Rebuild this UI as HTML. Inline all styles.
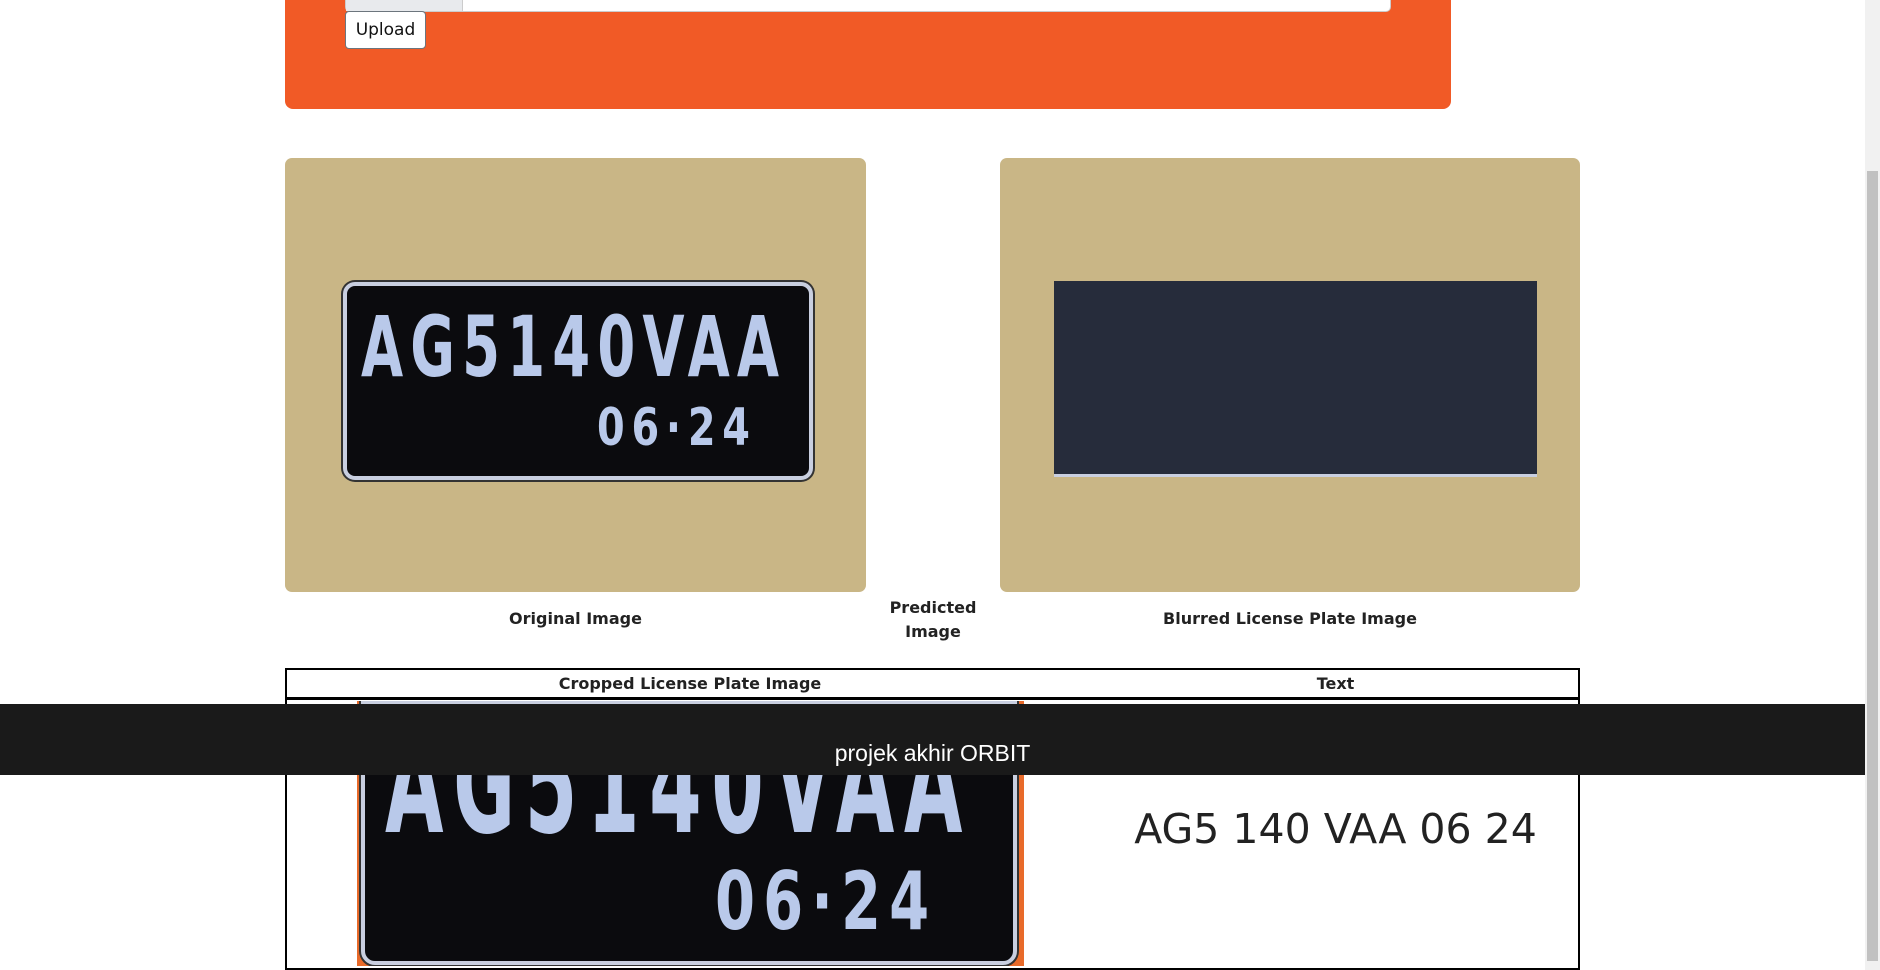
<!DOCTYPE html>
<html><head><meta charset="utf-8"><style>
body{margin:0;width:1880px;height:970px;overflow:hidden;background:#fff;font-family:"DejaVu Sans","Liberation Sans",sans-serif;position:relative}
.a{position:absolute}
.tan{background:#c9b686;border-radius:7px;overflow:hidden}
.plate{background:#0b0b0e;border:4px solid #c9cfe0;border-radius:12px;box-shadow:0 0 0 2px #333;color:#b9c9ea;font-family:"DejaVu Sans Condensed","DejaVu Sans",sans-serif;font-weight:bold}
.cap{font-weight:bold;font-size:16px;color:#222;text-align:center}
</style></head><body>
<div class="a" style="left:285px;top:-10px;width:1166px;height:119px;background:#f15a26;border-radius:8px"></div>
<div class="a" style="left:345px;top:-4px;width:1044px;height:14px;background:#fff;border:1px solid #ccc;border-radius:0 0 5px 5px"></div>
<div class="a" style="left:346px;top:-4px;width:116px;height:15px;background:#e8eaed;border-right:1px solid #ccc"></div>
<div class="a" style="left:345px;top:11px;width:79px;height:36px;background:#fff;border:1px solid #6c757d;border-radius:4px;font-size:17px;line-height:36px;text-align:center;color:#111">Upload</div>

<div class="a tan" style="left:285px;top:158px;width:581px;height:434px">
 <div class="a plate" style="left:58px;top:124px;width:462px;height:190px">
  <div class="a" style="left:14px;top:12px;font-size:84px;letter-spacing:10px;transform:scaleX(0.72);transform-origin:left">AG5140VAA</div>
  <div class="a" style="left:250px;top:112px;font-size:52px;letter-spacing:8px;transform:scaleX(0.85);transform-origin:left">06·24</div>
 </div>
</div>
<div class="a tan" style="left:1000px;top:158px;width:580px;height:434px">
 <div class="a" style="left:54px;top:123px;width:483px;height:193px;background:#262c3b;border-bottom:3px solid #c9cfe0"></div>
</div>
<div class="a cap" style="left:285px;top:609px;width:581px">Original Image</div>
<div class="a cap" style="left:880px;top:596px;width:106px;line-height:24px">Predicted Image</div>
<div class="a cap" style="left:1000px;top:609px;width:580px">Blurred License Plate Image</div>

<div class="a" style="left:285px;top:668px;width:1291px;height:298px;border:2px solid #000"></div>
<div class="a" style="left:287px;top:697px;width:1291px;height:3px;background:#000"></div>
<div class="a cap" style="left:287px;top:674px;width:806px">Cropped License Plate Image</div>
<div class="a cap" style="left:1093px;top:674px;width:485px">Text</div>
<div class="a" style="left:357px;top:701px;width:667px;height:265px;background:#e86a2a;overflow:hidden">
 <div class="a plate" style="left:4px;top:0;width:648px;height:256px;border-radius:0 0 14px 14px">
  <div class="a" style="left:20px;top:-2px;font-size:140px;letter-spacing:16px;transform:scaleX(0.6);transform-origin:left">AG5140VAA</div>
  <div class="a" style="left:350px;top:150px;font-size:80px;letter-spacing:10px;transform:scaleX(0.8);transform-origin:left">06·24</div>
 </div>
</div>
<div class="a" style="left:1093px;top:805px;width:485px;text-align:center;font-size:41px;color:#222">AG5 140 VAA 06 24</div>

<div class="a" style="left:0;top:704px;width:1865px;height:71px;background:#1a1a1a;color:#fff;font-family:'Liberation Sans',sans-serif;font-size:23px;text-align:center;line-height:98px">projek akhir ORBIT</div>
<div class="a" style="left:1865px;top:0;width:15px;height:970px;background:#f1f1f1"></div>
<div class="a" style="left:1867px;top:171px;width:11px;height:790px;background:#c1c1c1"></div>
</body></html>
